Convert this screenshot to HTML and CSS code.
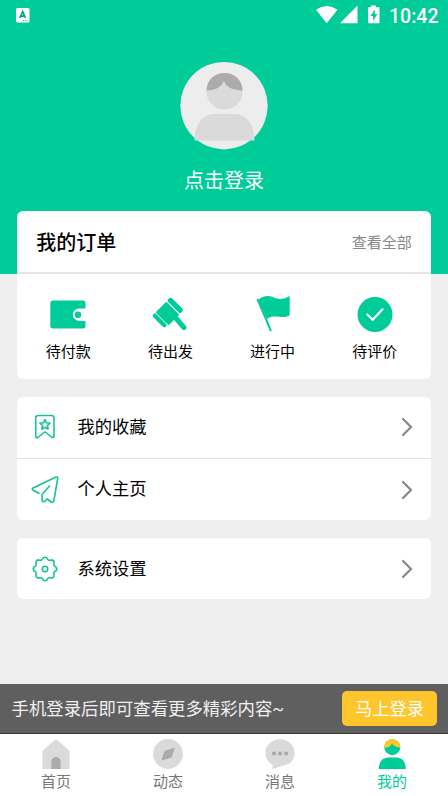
FILE: index.html
```html
<!DOCTYPE html>
<html lang="zh-CN">
<head>
<meta charset="utf-8">
<title>我的</title>
<link rel="stylesheet" href="styles.css">
</head>
<body>
<div class="app">
  <header class="hero">
    <div class="status">
      <svg class="status-app" width="14" height="15" viewBox="0 0 14 15"><rect width="13.5" height="14.5" rx="1.5" fill="#fff"/><path d="M3.8 10 6.7 3.6 9.4 10M4.8 8.2h3.6" fill="none" stroke="#00a982" stroke-width="1.7"/><path d="M7 12.5h5" stroke="#00a982" stroke-dasharray="1 .8" stroke-width=".8"/></svg>
      <div class="status-right">
        <svg width="66" height="20" viewBox="0 0 66 20" fill="#fff"><path d="M0 4.7Q10.700-2.700 21.500 4.700L10.700 18.300Z"/><path d="M41.500 0.500V18.200H24Z"/><path fill-rule="evenodd" d="M55 .5h5v1.700h3.500v16H52v-16h3zM59 4.500 54.300 11h2.800v4.800L61.500 9h-2.700z"/></svg>
        <span class="clock">10:42</span>
      </div>
    </div>
    <svg class="avatar" width="88" height="88" viewBox="0 0 88 88">
      <circle cx="44" cy="43.700" r="43.700" fill="#ededed"/>
      <circle cx="44.500" cy="29.500" r="18" fill="#dadada"/>
      <path d="M26.600 28.500C26.600 5 62.500 5 62.500 28.500 54 28 46 26 43.900 18.500 42 25 35 28.500 26.600 28.500Z" fill="#ababab"/>
      <path d="M14.500 78.500C15 62 22 52 35 52H54C67 52 74 62 74.500 78.500Z" fill="#dadada"/>
    </svg>
    <div class="login">点击登录</div>
  </header>

  <main class="content">
    <section class="card orders">
      <div class="orders-head"><h2>我的订单</h2><span>查看全部</span></div>
      <div class="orders-grid">
        <div class="order">
          <svg width="40" height="40" viewBox="0 0 40 40"><path fill="#0c9" d="M5 6.500H35Q37.500 6.500 37.500 9V14.500H31a6.200 6.200 0 0 0 0 12.400H37.500V32Q37.500 34.500 35 34.500H5Q2.300 34.500 2.300 32V9Q2.300 6.500 5 6.500Z"/><circle cx="30" cy="20.700" r="3.200" fill="#0c9"/></svg>
          <span>待付款</span>
        </div>
        <div class="order">
          <svg width="40" height="40" viewBox="422 284 120 120"><path fill="#0c9" d="M471 307 510 346 478 378 439 339Z"/><g fill="none" stroke="#0c9" stroke-linecap="round"><path d="M484 305 511 332" stroke-width="18"/><path d="M438 349 465 376" stroke-width="15"/><path d="M494 350 524 385" stroke-width="15"/></g><path d="M471 303 512 344M435 338 474 377" stroke="#fff" stroke-width="2"/></svg>
          <span>待出发</span>
        </div>
        <div class="order">
          <svg width="40" height="40" viewBox="83 284 120 120"><path d="M97 301 136 393" stroke="#0c9" stroke-width="6" stroke-linecap="round"/><path fill="#0c9" d="M98 301C121 285 135 290 149 296S179 298 193 290V348C173 362 148 341 125 359Z"/></svg>
          <span>进行中</span>
        </div>
        <div class="order">
          <svg width="40" height="40" viewBox="0 0 40 40"><circle cx="20" cy="20.500" r="17.500" fill="#0c9"/><path d="m12.300 20.500 5.400 5.300 9.800-10.500" fill="none" stroke="#fff" stroke-width="2.200" stroke-linecap="round" stroke-linejoin="round"/></svg>
          <span>待评价</span>
        </div>
      </div>
    </section>

    <section class="card menu">
      <div class="row">
        <svg class="icon" width="30" height="30" viewBox="0 0 30 30"><path d="M8.500 3.500H21.500Q24 3.500 24 6V24Q24 26.500 21.500 25L16 20.500Q15 19.700 14 20.500L8.500 25Q5.700 27 5.700 24V6Q5.700 3.500 8.500 3.500Z"/><path d="m15 7.500 1.400 3.200 3.600.4-2.600 2.400.7 3.500-3.100-1.700-3.200 1.700.8-3.500-2.700-2.400 3.600-.4Z"/></svg>
        <span>我的收藏</span>
        <svg class="arrow" width="12" height="20" viewBox="0 0 12 20"><path d="m2 2 8 8-8 8"/></svg>
      </div>
      <div class="row">
        <svg class="icon" width="30" height="30" viewBox="0 0 30 30"><path d="M8.900 18.300 3 15.200Q1.500 14 3.100 13L25.500 2.200Q27.800 1.500 27.800 3L23.800 26Q23.100 28 21.300 27L17 24 14.700 26.500Q12.400 27.300 12.100 25.500V19.500M13 18.500 19.500 11"/></svg>
        <span>个人主页</span>
        <svg class="arrow" width="12" height="20" viewBox="0 0 12 20"><path d="m2 2 8 8-8 8"/></svg>
      </div>
    </section>

    <section class="card menu">
      <div class="row last">
        <svg class="icon" width="30" height="30" viewBox="0 0 30 30"><path d="M11.700 5.900Q12.700 5.300 13 4.100Q15 2.500 17 4.100Q17.300 5.300 18.300 5.900Q19.800 6.500 21.500 5.900Q24 6.200 24.100 8.500Q23.500 10.200 24.100 11.700Q24.700 12.700 25.900 13Q27.500 15 25.900 17Q24.700 17.300 24.100 18.300Q23.500 19.800 24.100 21.500Q23.800 24 21.500 24.100Q19.800 23.500 18.300 24.100Q17.300 24.700 17 25.900Q15 27.500 13 25.900Q12.700 24.700 11.700 24.100Q10.200 23.500 8.500 24.100Q6 23.800 5.900 21.500Q6.500 19.800 5.900 18.300Q5.300 17.300 4.100 17Q2.500 15 4.100 13Q5.300 12.700 5.900 11.700Q6.500 10.200 5.900 8.500Q6.200 6 8.500 5.900Q10.200 6.500 11.700 5.900Z"/><circle cx="15" cy="15" r="2.700"/></svg>
        <span>系统设置</span>
        <svg class="arrow" width="12" height="20" viewBox="0 0 12 20"><path d="m2 2 8 8-8 8"/></svg>
      </div>
    </section>
  </main>

  <div class="banner"><span>手机登录后即可查看更多精彩内容~</span><button>马上登录</button></div>
  <nav class="tabs">
    <div class="tab">
      <svg width="30" height="30" viewBox="0 0 30 30"><path d="M13 1.500Q15 0 17 1.500L28.500 12V30H1.500V12Z" fill="#dadada"/><path d="M10.400 30V22.500C10.400 16.500 19.600 16.500 19.600 22.500V30Z" fill="#ababab"/></svg>
      <span>首页</span>
    </div>
    <div class="tab">
      <svg width="30" height="30" viewBox="0 0 30 30"><circle cx="15" cy="15" r="14.900" fill="#dadada"/><path d="M21.200 9.300 18.200 18.300 9 20.800 12 12.200Z" fill="#ababab" stroke="#ababab" stroke-linejoin="round"/></svg>
      <span>动态</span>
    </div>
    <div class="tab">
      <svg width="30" height="30" viewBox="0 0 30 30"><path d="M15 .2C23 .2 29.700 6 29.700 14S24 25.600 17 27L7.500 30Q6.700 29.700 8 26C3.500 23.500.3 19.500.3 14 .3 6 7 .2 15 .2Z" fill="#dadada"/><g fill="#ababab"><circle cx="9" cy="14.500" r="2.100"/><circle cx="15" cy="14.500" r="2.100"/><circle cx="21.200" cy="14.500" r="2.100"/></g></svg>
      <span>消息</span>
    </div>
    <div class="tab active">
      <svg width="30" height="30" viewBox="0 0 30 30"><circle cx="15.300" cy="8.200" r="8" fill="#0c9"/><path d="M7.300 8.700C6.500-2.700 24.100-2.700 23.300 8.700 19 8 16.500 7 14.900 4.500 13.500 7.500 11 8.500 7.300 8.700Z" fill="#ffc52c"/><path d="M1.800 30C2 22 6 18.500 11.500 18.500H19C25 18.500 28.500 22 28.800 30Z" fill="#0c9"/></svg>
      <span>我的</span>
    </div>
  </nav>
</div>
</body>
</html>
```

FILE: styles.css
```css
* { box-sizing: border-box; }
body { margin: 0; background: #efefef; color: #111; font-family: Roboto, "Noto Sans CJK SC", sans-serif; }
svg { display: block; flex: none; }
.app { width: 448px; height: 796px; display: flex; flex-direction: column; overflow: hidden; }
.hero { height: 273.5px; flex: none; background: #0c9; display: flex; flex-direction: column; align-items: center; color: #fff; }
.status { width: 100%; height: 30px; flex: none; padding: 5px 10px 0 16px; display: flex; justify-content: space-between; }
.status-app { margin-top: 2.5px; }
.status-right { display: flex; gap: 7px; }
.clock { width: 49px; font-size: 19.5px; font-weight: 500; line-height: 23px; white-space: nowrap; }
.avatar { margin-top: 32px; }
.login { margin-top: 15px; font: 20px/30px "Noto Sans CJK SC", sans-serif; }
.content { flex: 1; min-height: 0; margin-top: -62.5px; padding: 0 17.3px; }
.card { background: #fff; border-radius: 6px; margin-bottom: 18px; overflow: hidden; }
.orders { height: 168px; }
.orders-head { height: 62.5px; border-bottom: 2px solid #e6e6e6; padding: 1px 19px 0; display: flex; align-items: center; justify-content: space-between; }
.orders-head h2 { margin: 0; padding-top: 1.5px; font-size: 20px; font-weight: 500; line-height: 30px; color: #000; }
.orders-head span { font-size: 15px; color: #888; }
.orders-grid { width: 408.4px; display: grid; grid-template-columns: repeat(4, 1fr); padding-top: 20px; }
.order { display: flex; flex-direction: column; align-items: center; gap: 7px; font-size: 15px; line-height: 22px; color: #000; }
.row { height: 61px; display: flex; align-items: center; padding: 0 18px 1px 12.7px; font-size: 17.3px; color: #000; }
.row + .row { height: 62px; border-top: 1px solid #e2e2e2; padding-bottom: 0; }
.row.last { padding-bottom: 0; }
.row span { flex: 1; margin-left: 17.5px; padding-bottom: 4px; }
.row.last span { padding-bottom: 2px; }
.icon { fill: none; stroke: #15c396; stroke-width: 1.6; stroke-linejoin: round; stroke-linecap: round; }
.arrow { fill: none; stroke: #888; stroke-width: 2.2; stroke-linecap: round; }
.banner { height: 50px; flex: none; background: #5f5f5f; border-bottom: 1px solid #3e3838; padding: 0 11px 0 11.5px; display: flex; align-items: center; justify-content: space-between; color: #f1f1f1; font-size: 17.4px; white-space: nowrap; }
.banner span { padding-bottom: 3px; }
.banner button { width: 95px; height: 35px; border: 0; border-radius: 5px; padding: 0 0 2px; background: #ffc52c; color: #fff; font: 17.3px "Noto Sans CJK SC", sans-serif; }
.tabs { height: 62px; flex: none; background: #fff; display: grid; grid-template-columns: repeat(4, 1fr); }
.tab { padding-top: 5px; display: flex; flex-direction: column; align-items: center; font-size: 15px; line-height: 26px; color: #777; }
.tab.active { color: #0c9; }
```
